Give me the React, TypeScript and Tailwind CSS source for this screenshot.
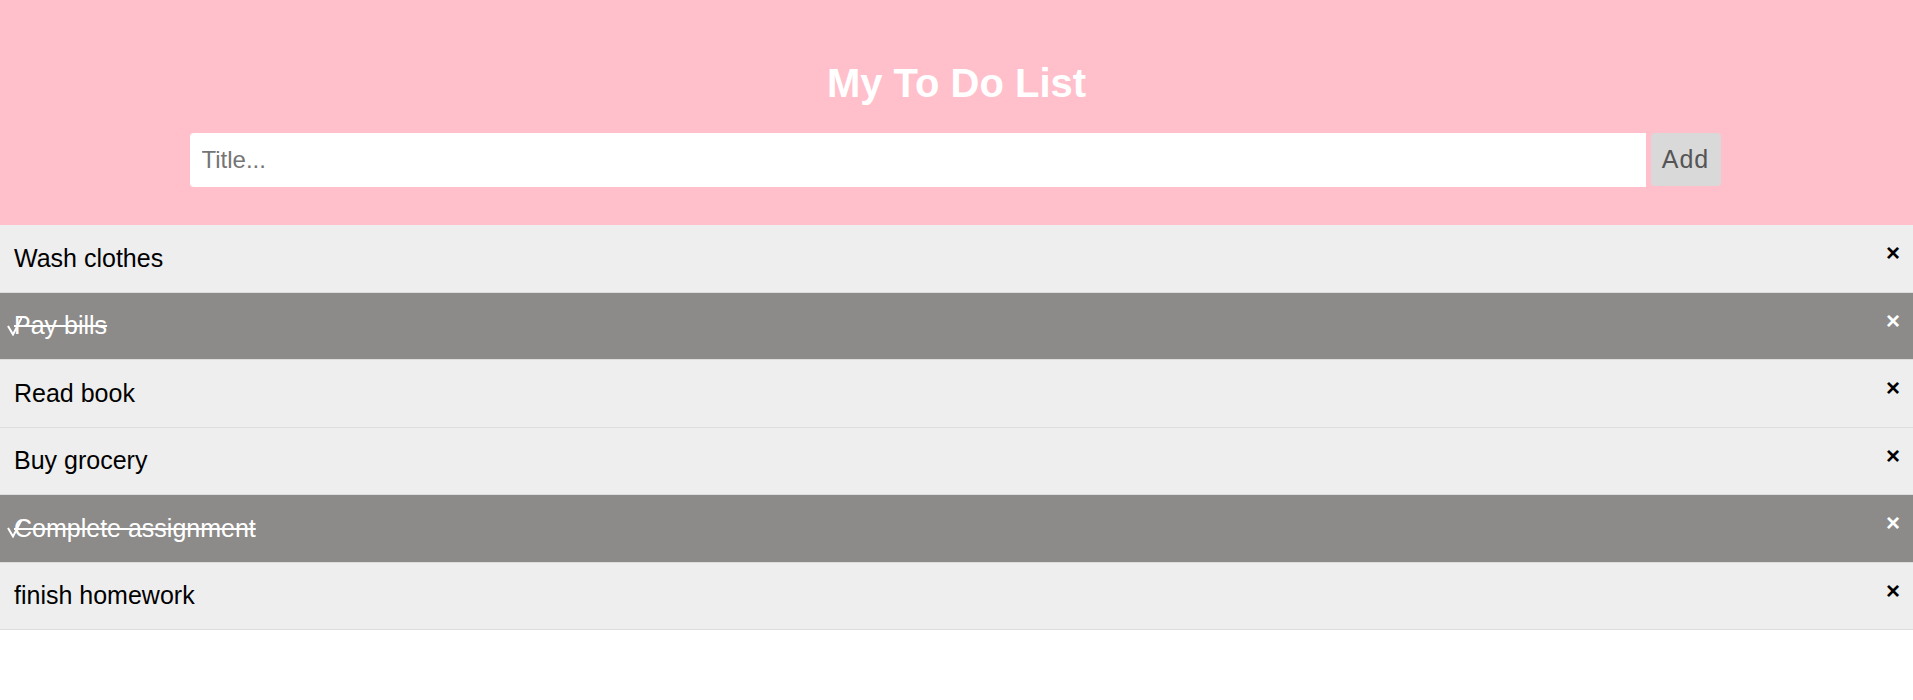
import React from "react";

const items = [
  { text: "Wash clothes", done: false },
  { text: "Pay bills", done: true },
  { text: "Read book", done: false },
  { text: "Buy grocery", done: false },
  { text: "Complete assignment", done: true },
  { text: "finish homework", done: false },
];

export default function App() {
  return (
    <div className="w-full bg-white min-h-[700px]" style={{ fontFamily: '"Liberation Sans", Arial, sans-serif' }}>
      <div className="bg-[#ffc0cb] pt-[60px] pb-[38px] flex flex-col items-center">
        <h1 className="text-white font-bold text-[40px] leading-[46px] m-0">My To Do List</h1>
        <div className="mt-[27px] flex gap-[5px] mr-[3px]">
          <input
            type="text"
            placeholder="Title..."
            className="w-[1456px] h-[54px] bg-white rounded-l-[4px] pl-[12px] text-[24px] text-black placeholder:text-[#757575] outline-none border-none"
            style={{ fontFamily: '"Liberation Sans", Arial, sans-serif' }}
          />
          <button className="w-[70px] h-[53px] bg-[#d9d9d9] text-[#555] text-[25px] rounded-[4px] flex items-center justify-center tracking-[1px]">
            Add
          </button>
        </div>
      </div>
      <ul className="m-0 p-0 list-none">
        {items.map((it, i) => (
          <li
            key={i}
            className={
              "relative flex justify-between h-[67.5px] border-b border-[#dddddd] " +
              (it.done ? "bg-[#8c8b89] text-white" : "bg-[#eeeeee] text-black")
            }
          >
            {it.done && (
              <svg className="absolute left-[7px] top-[24px]" width="16" height="19" viewBox="0 0 16 19">
                <polyline points="1,9 6,17.5 14.5,1" fill="none" stroke="white" strokeWidth="2" />
              </svg>
            )}
            <span className={"self-center pl-[14px] text-[25px] " + (it.done ? "line-through" : "")}>{it.text}</span>
            <span className="pt-[16px] pr-[13px] text-[24px] leading-none font-bold">×</span>
          </li>
        ))}
      </ul>
    </div>
  );
}
